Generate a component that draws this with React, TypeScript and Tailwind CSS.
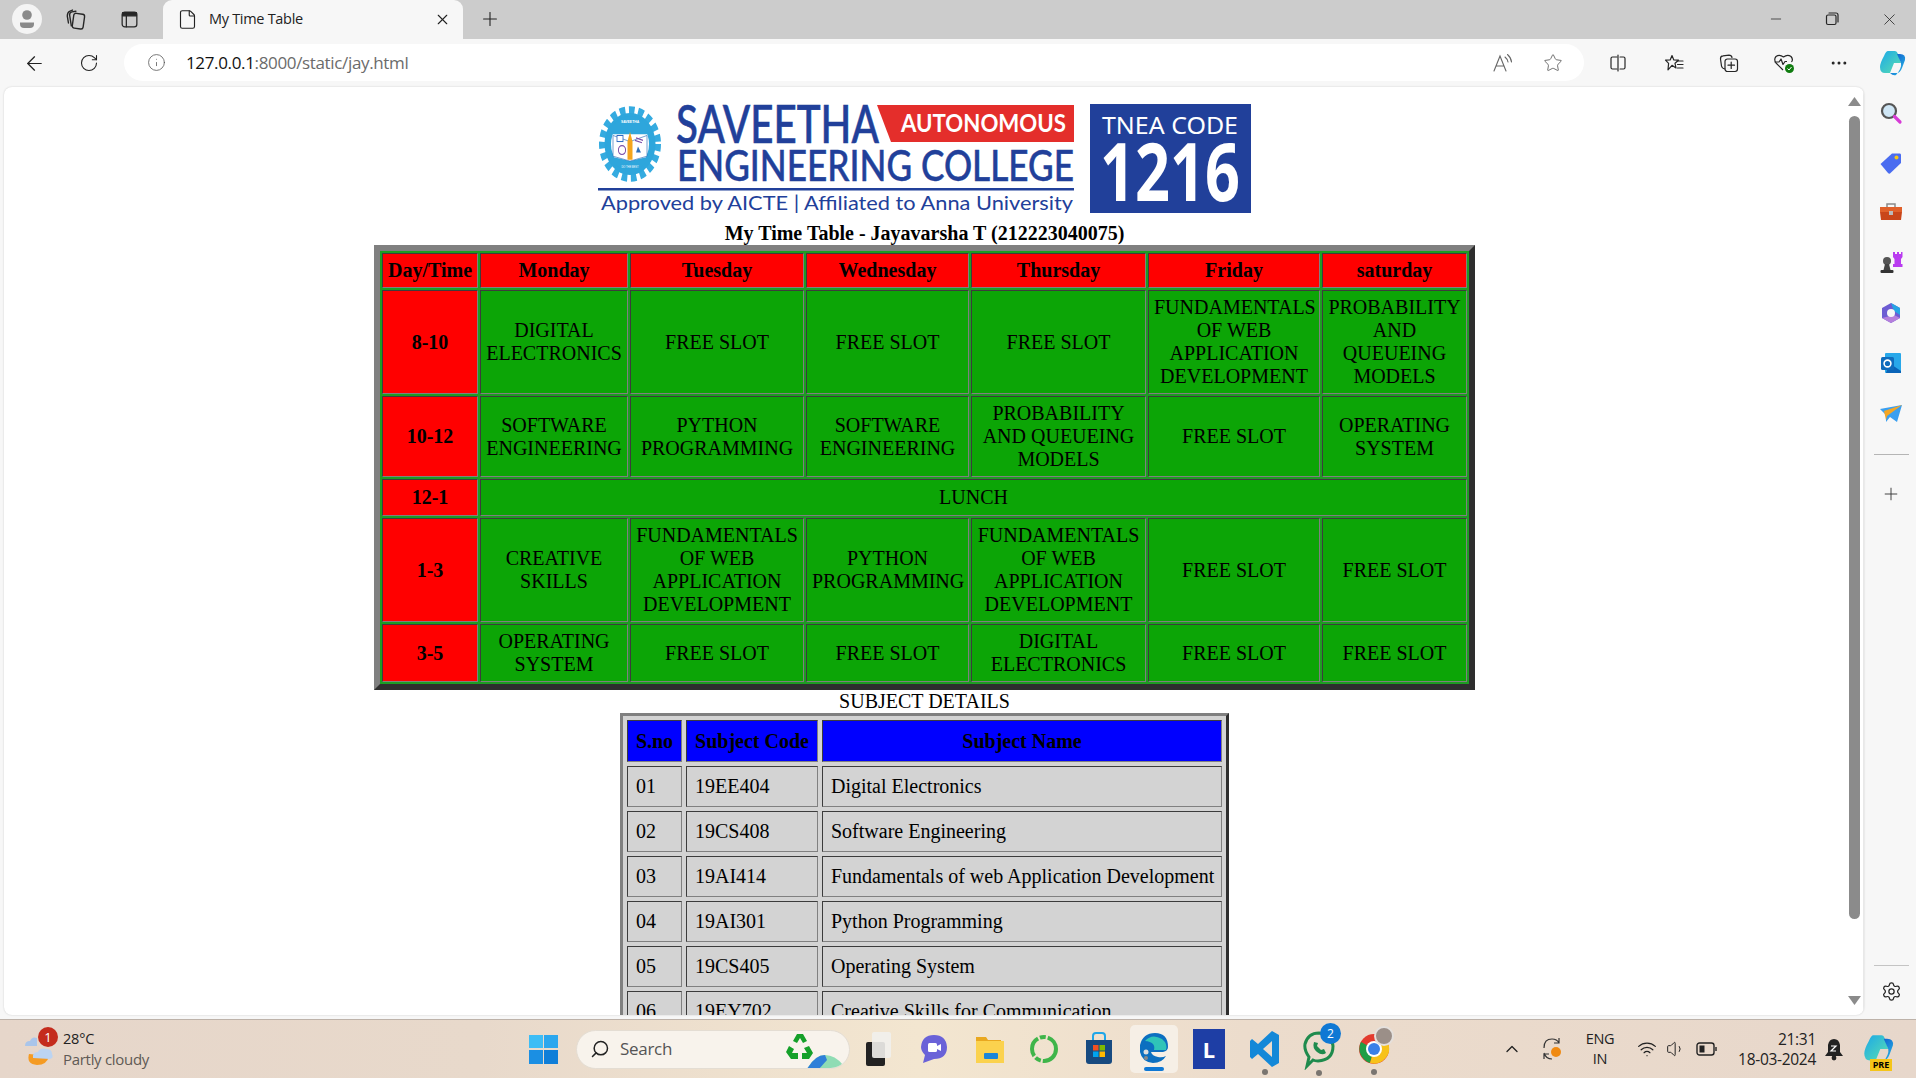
import React from "react";
import { ArrowLeft, RotateCw, Info, X, Plus, Star, Minus, MoreHorizontal, Search, ChevronUp, Wifi, Volume1, Settings, File } from "lucide-react";

const cell = "border border-solid border-t-[#3c3c3c] border-l-[#3c3c3c] border-b-[#808080] border-r-[#808080] p-[5px] text-center align-middle";
const red = "bg-[#ff0000] font-bold " + cell;
const grn = "bg-[#0ca506] font-normal " + cell;

const days = ["Monday", "Tuesday", "Wednesday", "Thursday", "Friday", "saturday"];
const FWAD = "FUNDAMENTALS OF WEB APPLICATION DEVELOPMENT";
const PQM = "PROBABILITY AND QUEUEING MODELS";
const rows: [string, string[]][] = [
  ["8-10", ["DIGITAL ELECTRONICS", "FREE SLOT", "FREE SLOT", "FREE SLOT", FWAD, PQM]],
  ["10-12", ["SOFTWARE ENGINEERING", "PYTHON PROGRAMMING", "SOFTWARE ENGINEERING", PQM, "FREE SLOT", "OPERATING SYSTEM"]],
  ["12-1", ["LUNCH"]],
  ["1-3", ["CREATIVE SKILLS", FWAD, "PYTHON PROGRAMMING", FWAD, "FREE SLOT", "FREE SLOT"]],
  ["3-5", ["OPERATING SYSTEM", "FREE SLOT", "FREE SLOT", "DIGITAL ELECTRONICS", "FREE SLOT", "FREE SLOT"]],
];
const subjects = [
  ["01", "19EE404", "Digital Electronics"],
  ["02", "19CS408", "Software Engineering"],
  ["03", "19AI414", "Fundamentals of web Application Development"],
  ["04", "19AI301", "Python Programming"],
  ["05", "19CS405", "Operating System"],
  ["06", "19EY702", "Creative Skills for Communication"],
];
const subTh = "bg-[#0000ff] font-bold whitespace-nowrap border border-solid border-t-[#3c3c3c] border-l-[#3c3c3c] border-b-[#808080] border-r-[#808080] py-[8px] text-center";
const subTd = "bg-[#d3d3d3] font-normal whitespace-nowrap border border-solid border-t-[#3c3c3c] border-l-[#3c3c3c] border-b-[#808080] border-r-[#808080] px-[8px] py-[8px] text-left";

function Logo() {
  return (
    <svg width="653" height="109" viewBox="598 104 653 109" className="block">
      <g transform="translate(630 144) scale(1 1.22)">
        <circle r="27" fill="none" stroke="#35abe0" strokeWidth="8" strokeDasharray="5.5 3.5" />
        <circle r="25.5" fill="#2ea6dc" />
        <circle r="19" fill="#fff" />
        <path d="M-17 -8 L-17 -15 A22 22 0 0 1 17 -15 L17 -8 Z" fill="#2ea6dc" />
        <path d="M-15 16 A22 22 0 0 0 15 16 L15 11 L0 14 L-15 11 Z" fill="#2ea6dc" />
        <path d="M-17 -7 L0 -2 L17 -7 L17 10 L0 14 L-17 10 Z" fill="#fff" stroke="#2f6fb8" strokeWidth="0.6" />
        <rect x="-13" y="-7" width="6" height="5" fill="#fff" stroke="#2563c0" strokeWidth="0.8" />
        <circle cx="-8" cy="5" r="3.6" fill="none" stroke="#7c4fa8" strokeWidth="1" />
        <path d="M6 -5 L13 -3 M5 -3 L12 -1" stroke="#7c4fa8" strokeWidth="1" />
        <path d="M8 2 L11 7 L6 7 Z" fill="#2f6fb8" />
        <path d="M0 -10 L2.5 -2 L2.5 13 L-2.5 13 L-2.5 -2 Z" fill="#f4a51c" />
        <text y="-17" textAnchor="middle" fontSize="3.4" fontWeight="700" fill="#fff" fontFamily="'Liberation Sans', sans-serif">SAVEETHA</text>
        <text y="20" textAnchor="middle" fontSize="2.6" fill="#fff" fontFamily="'Liberation Sans', sans-serif">DO THE BEST</text>
      </g>
      <polygon points="877,105 1074,105 1074,142 891,142" fill="#e42e2b" />
      <g fontFamily="'Lato', 'Noto Sans', 'Liberation Sans', sans-serif">
        <text x="676" y="143" fontSize="53" fontWeight="500" fill="#21409a" stroke="#21409a" strokeWidth="0.6" textLength="203" lengthAdjust="spacingAndGlyphs">SAVEETHA</text>
        <text x="677" y="181" fontSize="43" fontWeight="500" fill="#21409a" stroke="#21409a" strokeWidth="0.5" textLength="397" lengthAdjust="spacingAndGlyphs">ENGINEERING COLLEGE</text>
        <text x="901" y="132" fontSize="25" fontWeight="700" fill="#fff" textLength="165" lengthAdjust="spacingAndGlyphs">AUTONOMOUS</text>
        <text x="601" y="210" fontSize="20" fill="#21409a" textLength="472" lengthAdjust="spacingAndGlyphs">Approved by AICTE  |  Affiliated to Anna University</text>
      </g>
      <rect x="598" y="188" width="476" height="2.5" fill="#21409a" />
      <rect x="1090" y="104" width="161" height="109" fill="#21409a" />
      <g fontFamily="'Noto Sans', 'Liberation Sans', sans-serif" fill="#fff">
        <text x="1102" y="134" fontSize="24" textLength="136" lengthAdjust="spacingAndGlyphs">TNEA CODE</text>
        <text x="1100" y="201" fontSize="80" fontWeight="700" textLength="140" lengthAdjust="spacingAndGlyphs">1216</text>
      </g>
    </svg>
  );
}

const Box = ({ w = 24, className = "", children }: { w?: number; className?: string; children: React.ReactNode }) => (
  <div className={"flex items-center justify-center shrink-0 " + className} style={{ width: w }}>{children}</div>
);

const I = ({ children, s = 20, vb = 20 }: { children: React.ReactNode; s?: number; vb?: number }) => (
  <svg width={s} height={s} viewBox={`0 0 ${vb} ${vb}`} fill="none" stroke="#262626" strokeWidth="1.2" strokeLinecap="round" strokeLinejoin="round">{children}</svg>
);

function TabBar() {
  return (
    <div className="h-[39px] bg-[#cccccc] flex items-stretch shrink-0">
      <Box w={30} className="ml-[12px] pb-[1px]">
        <div className="w-[30px] h-[30px] rounded-full bg-[#f4f4f4] flex items-center justify-center">
          <svg width="16" height="20" viewBox="0 0 16 20"><circle cx="8" cy="6" r="4.8" fill="#8a8a8a" /><path d="M1 13.5 H15 V15 A4 4 0 0 1 11 19 H5 A4 4 0 0 1 1 15 Z" fill="#8a8a8a" /></svg>
        </div>
      </Box>
      <Box className="ml-[22px] pb-[1px]">
        <I s={23}><rect x="7" y="5" width="9.5" height="13" rx="2" transform="rotate(8 12 11)" /><path d="M5.5 15.5 L4 6 Q4 3.8 6 3.4 L9.5 2.8" /><path d="M3 13 L2 7 Q2 4 4 3 L6.5 1.8" /></I>
      </Box>
      <Box className="ml-[29px] pb-[1px]">
        <I s={21}><rect x="3" y="3" width="14" height="14" rx="2.5" /><path d="M3.4 3.5 H16.6 V6.5 H3.4 Z" fill="#262626" /><path d="M7 6.5 V17" /></I>
      </Box>
      <div className="ml-[22px] w-[300px] bg-[#f7f7f7] rounded-t-[9px] flex items-center pb-[1px]">
        <File size={21} strokeWidth={1.3} color="#222" className="ml-[14px]" />
        <span className="ml-[11px] text-[14.5px] text-[#222] font-['Open_Sans','Noto_Sans',sans-serif] tracking-[-0.3px]">My Time Table</span>
        <X size={17} strokeWidth={1.6} color="#222" className="ml-auto mr-[12px]" />
      </div>
      <Box className="ml-[15px] pb-[1px]"><Plus size={22} strokeWidth={1.2} color="#222" /></Box>
      <div className="ml-auto flex pb-[1px]">
        <Box w={56}><Minus size={16} strokeWidth={1.1} color="#222" /></Box>
        <Box w={56}>
          <I s={16} vb={16}><rect x="2.5" y="4" width="9.5" height="9.5" rx="1.5" /><path d="M5 2 H12 Q14 2 14 4 V11" /></I>
        </Box>
        <Box w={56} className="pl-[3px]"><X size={19} strokeWidth={1} color="#222" /></Box>
      </div>
    </div>
  );
}

function Toolbar() {
  return (
    <div className="h-[48px] flex items-center shrink-0">
      <Box className="ml-[22px]"><ArrowLeft size={23} strokeWidth={1.3} color="#222" /></Box>
      <Box className="ml-[31px]"><RotateCw size={20} strokeWidth={1.3} color="#222" /></Box>
      <div className="ml-[23px] w-[1460px] h-[37px] -mt-[1px] bg-white rounded-full flex items-center">
        <Box w={20} className="ml-[22px]"><Info size={19} strokeWidth={1} color="#555" /></Box>
        <span className="ml-[20px] text-[17px] font-['Open_Sans','Noto_Sans',sans-serif] tracking-[-0.35px] text-[#6b6b6b]"><span className="text-[#111]">127.0.0.1</span>:8000/static/jay.html</span>
        <div className="ml-auto flex items-center gap-[26px] mr-[19px]">
          <Box>
            <svg width="22" height="22" viewBox="0 0 22 22" fill="none" stroke="#666" strokeWidth="1.1" strokeLinecap="round"><path d="M2 19 L8 4 L14 19 M4.2 14 H12" /><path d="M13 5 Q15.5 7 16 10 M15.5 2.5 Q19 5.5 19.5 10" /></svg>
          </Box>
          <Box><Star size={20} strokeWidth={1.1} color="#666" /></Box>
        </div>
      </div>
      <Box className="ml-[22px]">
        <I><path d="M9 4 H4.5 Q3 4 3 5.5 V14.5 Q3 16 4.5 16 H9" /><path d="M10 2 V18" /><path d="M12 4 H15.5 Q17 4 17 5.5 V14.5 Q17 16 15.5 16 H12" /></I>
      </Box>
      <Box className="ml-[32px]">
        <I><path d="M8 2.5 L9.8 7 L14.5 7.2 L11 10.3 L12 15 L8 12.3 L4 16.8 L4.6 10.3 L1.5 7.2 L6.2 7 Z" /><path d="M13 8 H19 M13.5 11.5 H19 M13.5 15 H19" /></I>
      </Box>
      <Box className="ml-[31px]">
        <I><path d="M6 16 Q3 15.5 2.5 13 L1.5 6 Q1.3 3 4 2.8 L10 2.2 Q12.5 2.2 13 4.5" /><rect x="6" y="6" width="12.5" height="12.5" rx="2.4" /><path d="M12.2 9 V15.5 M9 12.2 H15.5" /></I>
      </Box>
      <Box className="ml-[31px]">
        <svg width="22" height="22" viewBox="0 0 22 22" fill="none" stroke="#262626" strokeWidth="1.2" strokeLinejoin="round">
          <path d="M10 18 L3 11 Q0.5 7.5 3 4.5 Q6.5 1.8 10.5 5 Q14.5 1.8 18 4.5 Q20.5 7.5 18.5 10" />
          <path d="M1.5 10 H6 L8 7 L10 12.5 L12 9.5 H14" />
          <circle cx="16.5" cy="16.5" r="4.5" fill="#107c10" stroke="none" />
          <path d="M14.5 16.5 L16 18 L18.5 15" stroke="#fff" strokeWidth="1" />
        </svg>
      </Box>
      <Box className="ml-[31px]"><MoreHorizontal size={20} strokeWidth={1.6} color="#222" /></Box>
      <Box w={28} className="ml-[27px]"><Copilot size={30} /></Box>
    </div>
  );
}

function Copilot({ size = 28 }: { size?: number }) {
  return (
    <svg width={size} height={size} viewBox="0 0 28 28">
      <defs>
        <linearGradient id="cpA" x1="0" y1="0" x2="1" y2="1"><stop offset="0" stopColor="#1ba8e8" /><stop offset="1" stopColor="#5ce0b0" /></linearGradient>
        <linearGradient id="cpB" x1="0" y1="0" x2="1" y2="1"><stop offset="0" stopColor="#0d47c9" /><stop offset="1" stopColor="#28c3e8" /></linearGradient>
      </defs>
      <path d="M10 2 H17 Q19 2 20 5 L23 14 H16 L12 24 H7 Q2 24 2 18 Q2 14 6 7 Q8 2 10 2 Z" fill="url(#cpA)" />
      <path d="M12 24 H19 Q22 24 24 19 L27 11 Q28 5 22 5 H19 L23 14 Q24 19 18 26 Q15 27 12 24 Z" fill="url(#cpB)" />
    </svg>
  );
}

function Sidebar() {
  return (
    <div className="flex-1 flex flex-col items-center pl-[2px] pt-[14px] pb-[17px] gap-[26px]">
      <Box>
        <svg width="24" height="24" viewBox="0 0 24 24"><circle cx="10" cy="10" r="7" fill="#cfe6f5" stroke="#555" strokeWidth="2.2" /><path d="M15.5 15.5 L21 21" stroke="#d63bd6" strokeWidth="3.2" strokeLinecap="round" /></svg>
      </Box>
      <Box>
        <svg width="24" height="24" viewBox="0 0 24 24"><path d="M1.5 13 L13 2.5 H21 Q22 2.5 22 4 V12 L11 22.5 Q10 23 9 22 Z" fill="#4a6cf0" /><circle cx="17.5" cy="6.5" r="2" fill="#f5c518" /></svg>
      </Box>
      <Box>
        <svg width="24" height="24" viewBox="0 0 24 24"><path d="M8 6 V3 H16 V6" fill="none" stroke="#8a8a8a" strokeWidth="1.5" /><path d="M1 6 H23 V11 L22 19 H2 L1 11 Z" fill="#c9461a" /><rect x="1" y="6" width="22" height="5" fill="#e0602a" /><rect x="10" y="10" width="4" height="4" fill="#bbb" /></svg>
      </Box>
      <Box>
        <svg width="24" height="24" viewBox="0 0 24 24"><circle cx="8" cy="10" r="4" fill="#555" /><path d="M6 13 H10 L11.5 19 H4.5 Z" fill="#444" /><rect x="1.5" y="19" width="13" height="3" rx="1" fill="#333" /><path d="M14 1 H16 V3 H18 V1 H20 V3 H22 V1 H23.5 V6 L22 8 V13 H23.5 V16 H14 V13 H15.5 V8 L14 6 Z" fill="#b93cf0" /></svg>
      </Box>
      <Box>
        <svg width="24" height="24" viewBox="0 0 24 24" fill="none"><path d="M12 2 L21 7 V17 L12 22 L3 17 V7 Z" fill="#6d5cd3" /><path d="M12 2 L21 7 V14 L15 10 Z" fill="#26a5e4" /><path d="M3 17 L12 22 L21 17 L15 14 Z" fill="#b57fdc" /><circle cx="12" cy="12" r="4" fill="#f7f7f7" /></svg>
      </Box>
      <Box>
        <svg width="24" height="24" viewBox="0 0 24 24"><rect x="6" y="2" width="16" height="20" rx="1" fill="#28a8ea" /><path d="M10 12 L22 20 V22 H7 Z" fill="#0a64b8" /><rect x="2" y="6" width="13" height="13" rx="1.5" fill="#0f6cbd" /><circle cx="8.5" cy="12.5" r="3.4" fill="none" stroke="#fff" strokeWidth="1.6" /></svg>
      </Box>
      <Box>
        <svg width="24" height="24" viewBox="0 0 24 24"><path d="M1 8 L23 4 L18 21 L11 16 L7 21 L7 14 Z" fill="#3a9ff0" /><path d="M5 10 L23 4 L8 15 L7 19 Z" fill="#f5a623" /></svg>
      </Box>
      <div className="w-[35px] h-[1px] bg-[#b5b5b5] mt-[3px]" />
      <Box className="mt-[3px]"><Plus size={20} strokeWidth={1.1} color="#333" /></Box>
      <div className="mt-auto w-[35px] h-[1px] bg-[#c4c4c4]" />
      <Box className="-mt-[11px]"><Settings size={21} strokeWidth={1.4} color="#222" /></Box>
    </div>
  );
}

function Scrollbar() {
  return (
    <div className="w-[19px] flex flex-col items-center shrink-0 border-r border-r-[#e8e8e8]">
      <svg width="13" height="9" viewBox="0 0 13 9" className="mt-[10px]"><path d="M6.5 0 L13 9 H0 Z" fill="#8b8b8b" /></svg>
      <div className="w-[11px] h-[803px] rounded-full bg-[#8b8b8b] mt-[10px]" />
      <svg width="13" height="9" viewBox="0 0 13 9" className="mt-auto mb-[10px]"><path d="M0 0 H13 L6.5 9 Z" fill="#8b8b8b" /></svg>
    </div>
  );
}

function Page() {
  return (
    <div className="w-[1841px] h-full overflow-hidden flex flex-col items-center font-['Liberation_Serif','Times_New_Roman',serif] text-[20px] leading-[23px] text-black">
      <div className="h-[135px] w-full shrink-0 flex justify-center items-start pt-[17px]"><Logo /></div>
      <div className="font-bold h-[23px] shrink-0">My Time Table - Jayavarsha T (212223040075)</div>
      <table className="table-fixed w-[1101px] shrink-0 border-separate border-spacing-[2px] bg-[#1d9d22] border-[6px] border-solid border-t-[#808080] border-l-[#808080] border-b-[#2e2e2e] border-r-[#2e2e2e]">
        <colgroup>
          <col className="w-[96px]" /><col className="w-[148px]" /><col className="w-[174px]" /><col className="w-[163px]" /><col className="w-[175px]" /><col className="w-[172px]" /><col className="w-[145px]" />
        </colgroup>
        <thead>
          <tr>
            <th className={red + " px-0"}>Day/Time</th>
            {days.map((d) => <th key={d} className={red}>{d}</th>)}
          </tr>
        </thead>
        <tbody>
          {rows.map(([t, cs]) => (
            <tr key={t} className={cs.length === 1 ? "h-[37px]" : ""}>
              <th className={red}>{t}</th>
              {cs.map((c, i) => <td key={i} colSpan={cs.length === 1 ? 6 : 1} className={grn}>{c}</td>)}
            </tr>
          ))}
        </tbody>
      </table>
      <div className="h-[23px] shrink-0">SUBJECT DETAILS</div>
      <table className="table-fixed w-[609px] shrink-0 border-separate border-spacing-[4px] bg-[#d3d3d3] border-[3px] border-solid border-t-[#808080] border-l-[#808080] border-b-[#2e2e2e] border-r-[#2e2e2e]">
        <colgroup><col className="w-[55px]" /><col className="w-[132px]" /><col className="w-[400px]" /></colgroup>
        <thead>
          <tr className="h-[42px]"><th className={subTh + " px-0"}>S.no</th><th className={subTh + " px-0"}>Subject Code</th><th className={subTh + " px-[8px]"}>Subject Name</th></tr>
        </thead>
        <tbody>
          {subjects.map((r) => (
            <tr key={r[0]}>{r.map((c, i) => <td key={i} className={subTd}>{c}</td>)}</tr>
          ))}
        </tbody>
      </table>
    </div>
  );
}

function Taskbar() {
  return (
    <div className="h-[59px] shrink-0 border-t border-t-[#bdb2a9] bg-[linear-gradient(90deg,#e6d6ca,#e8d9cb_25%,#f3e6d0_48%,#ecdccc_65%,#e7d7cb)] flex items-center font-['Open_Sans','Noto_Sans',sans-serif] text-[#222]">
      <div className="relative w-[34px] ml-[23px] h-[38px]">
        <svg width="34" height="38" viewBox="0 0 34 38">
          <path d="M2 16 Q2 11 7 11 Q9 6 14 8 L14 16 Z" fill="#a9c5ea" />
          <path d="M6 24 Q3 34 14 35 Q24 35 26 26 Z" fill="#f59b23" />
          <path d="M10 28 Q9 22 15 22 Q17 17 23 19 Q29 19 29 24 Q31 28 27 29 Z" fill="#bcd4f2" />
        </svg>
        <div className="absolute top-[-3px] left-[15px] w-[20px] h-[20px] rounded-full bg-[#c42b1c] text-white text-[13px] leading-[20px] text-center">1</div>
      </div>
      <div className="ml-[6px] flex flex-col w-[120px] leading-[20px] -mt-[1px]">
        <span className="text-[14.5px] tracking-[-0.2px]">28°C</span>
        <span className="text-[15px] text-[#5f5a55] tracking-[-0.3px]">Partly cloudy</span>
      </div>
      <div className="ml-[346px] w-[29px] h-[29px] grid grid-cols-2 grid-rows-2 gap-[1.5px]">
        <div className="bg-[#3dbdf5]" /><div className="bg-[#2ba7ee]" /><div className="bg-[#1b8fe3]" /><div className="bg-[#0f7ed8]" />
      </div>
      <div className="ml-[18px] w-[274px] h-[39px] rounded-full bg-[#f8f3ec] border border-[#e4ddd3] flex items-center relative overflow-hidden">
        <Search size={20} strokeWidth={1.8} color="#222" className="ml-[13px] -scale-x-100" />
        <span className="ml-[10px] text-[17px] text-[#555] tracking-[-0.3px]">Search</span>
        <svg width="60" height="40" viewBox="0 0 60 40" className="ml-auto mr-[6px]">
          <path d="M14 5 L20 5 L24 12 L20 14 L17 9 L14 14 L10 12 Z M6 17 L11 20 L9 24 H15 V30 H8 L3 23 Z M26 17 L30 24 L26 30 H19 V24 H24 L21 19 Z" fill="#15a02a" />
          <path d="M24 40 Q32 26 42 26 Q52 26 60 36 V40 Z" fill="#8fdcb4" />
          <path d="M24 40 Q32 26 42 26 L44 31 L36 40 Z" fill="#2f7fd8" />
        </svg>
      </div>
      <Box w={30} className="ml-[13px]">
        <div className="relative w-[30px] h-[34px]">
          <div className="absolute left-[3px] bottom-0 w-[19px] h-[24px] bg-[#222] rounded-[2px]" />
          <div className="absolute left-[9px] top-[0px] w-[19px] h-[26px] bg-[#f1efec] rounded-[2px] opacity-90" />
        </div>
      </Box>
      <Box w={40} className="ml-[21px]">
        <svg width="32" height="32" viewBox="0 0 32 32"><path d="M16 2 Q28 2 29 14 Q29 26 16 26 L5 30 L7 22 Q3 18 3 14 Q4 2 16 2 Z" fill="#6a62d8" /><rect x="10" y="10" width="9" height="9" rx="1.5" fill="#fff" /><path d="M19 13 L23 11 V18 L19 16 Z" fill="#fff" /></svg>
      </Box>
      <Box w={40} className="ml-[16px]">
        <svg width="32" height="32" viewBox="0 0 32 32"><path d="M2 4 H12 L14 7 H27 V30 H2 Z" fill="#e9a820" /><rect x="2" y="8" width="28" height="22" fill="#fbd24e" /><rect x="10" y="20" width="14" height="6" rx="1" fill="#1b86d8" /></svg>
      </Box>
      <Box w={40} className="ml-[14px]">
        <svg width="32" height="32" viewBox="0 0 32 32" fill="none"><circle cx="16" cy="16" r="12" stroke="#3fb54a" strokeWidth="4" strokeDasharray="20 2 6 2" /></svg>
      </Box>
      <Box w={40} className="ml-[15px]">
        <svg width="32" height="34" viewBox="0 0 32 34"><path d="M10 8 V4 Q10 1 13 1 H19 Q22 1 22 4 V8" fill="none" stroke="#1fa6e8" strokeWidth="2" /><path d="M3 8 H29 V29 Q29 32 26 32 H6 Q3 32 3 29 Z" fill="#174a80" /><rect x="10" y="13" width="5.5" height="5.5" fill="#f25022" /><rect x="16.5" y="13" width="5.5" height="5.5" fill="#7fba00" /><rect x="10" y="19.5" width="5.5" height="5.5" fill="#00a4ef" /><rect x="16.5" y="19.5" width="5.5" height="5.5" fill="#ffb900" /></svg>
      </Box>
      <div className="ml-[11px] w-[48px] h-[48px] bg-[#f6efe6] rounded-[5px] flex flex-col items-center relative">
        <svg width="34" height="34" viewBox="0 0 34 34" className="mt-[6px]"><path d="M3 14 Q6 2 18 2 Q31 2 31 16 Q31 20 26 21 H14 Q15 25 21 26 Q25 27 29 25 Q25 32 16 32 Q5 31 3 21 Z" fill="#0c6fc0" /><path d="M8 10 Q15 2 25 8 Q31 13 29 19 H17 Q19 11 8 10 Z" fill="#2fc4b8" /><circle cx="9" cy="21" r="2.5" fill="#ddd" /><circle cx="9" cy="27" r="2" fill="#888" /></svg>
        <div className="absolute bottom-[2px] w-[20px] h-[4px] rounded-full bg-[#0f78d4]" />
      </div>
      <Box w={32} className="ml-[15px]">
        <div className="w-[32px] h-[40px] bg-[#1e3ea5] text-white font-bold text-[22px] leading-[40px] text-center font-['Noto_Sans',sans-serif]">L</div>
      </Box>
      <Box w={32} className="ml-[24px] relative">
        <svg width="32" height="40" viewBox="0 0 32 40"><path d="M23 2 L30 6 V34 L23 38 L9 25 L3 30 L1 28 V12 L3 10 L9 15 Z M23 12 L14 20 L23 28 Z" fill="#1488d8" /></svg>
        <div className="absolute -bottom-[6px] left-[13px] w-[6px] h-[6px] rounded-full bg-[#7a7570]" />
      </Box>
      <Box w={36} className="ml-[20px] relative">
        <svg width="32" height="42" viewBox="0 0 32 42" fill="none"><path d="M4 38 L6 29 Q1 22 2 16 Q5 5 16 5 Q29 6 30 18 Q30 32 15 33 Q12 33 10 32 Z" stroke="#1f8b4d" strokeWidth="3" /><path d="M11 14 Q9 20 14 24 Q19 28 23 25 L21 21 L18 22 L14 18 L15 15 Z" fill="#1f8b4d" /></svg>
        <div className="absolute -top-[5px] left-[19px] w-[21px] h-[21px] rounded-full bg-[#0f78d4] text-white text-[12px] leading-[21px] text-center">2</div>
        <div className="absolute -bottom-[6px] left-[15px] w-[6px] h-[6px] rounded-full bg-[#7a7570]" />
      </Box>
      <Box w={36} className="ml-[19px] relative">
        <svg width="32" height="32" viewBox="0 0 32 32"><circle cx="16" cy="16" r="15" fill="#e33b2e" /><path d="M16 16 L3 9 A15 15 0 0 0 12 30 Z" fill="#1f9e45" /><path d="M16 16 L12 30 A15 15 0 0 0 30 10 L16 10 Z" fill="#f7c21a" /><circle cx="16" cy="16" r="8" fill="#fff" /><circle cx="16" cy="16" r="6" fill="#3a80e8" /></svg>
        <div className="absolute -top-[7px] left-[18px] w-[20px] h-[20px] rounded-full bg-[#9b8f88] border-2 border-[#e5e0dc]" />
        <div className="absolute -bottom-[10px] left-[15px] w-[6px] h-[6px] rounded-full bg-[#7a7570]" />
      </Box>
      <Box className="ml-[108px]"><ChevronUp size={20} strokeWidth={1.6} color="#222" /></Box>
      <Box className="ml-[16px]">
        <svg width="24" height="26" viewBox="0 0 24 26" fill="none" stroke="#333" strokeWidth="1.2"><path d="M4 12 Q4 3 12 3 Q17 3 19 7 M19 2 V7 H14" /><path d="M4 17 Q6 23 12 23 M4 23 V18 H9" /><circle cx="16" cy="16" r="5" fill="#f08a12" stroke="none" /></svg>
      </Box>
      <div className="ml-[13px] w-[46px] text-center text-[14.5px] leading-[20px] tracking-[-0.3px]">ENG<br />IN</div>
      <Box className="ml-[12px]"><Wifi size={20} strokeWidth={1.5} color="#222" /></Box>
      <Box className="ml-[5px]"><Volume1 size={20} strokeWidth={1.2} color="#222" /></Box>
      <Box className="ml-[7px]">
        <svg width="22" height="14" viewBox="0 0 22 14" fill="none" stroke="#222" strokeWidth="1.4"><rect x="1" y="1" width="17" height="12" rx="2.5" /><rect x="3.5" y="3.5" width="5" height="7" fill="#222" stroke="none" /><path d="M20 5 V9" /></svg>
      </Box>
      <div className="ml-[8px] w-[89px] text-right text-[15.5px] leading-[20px] tracking-[-0.3px] whitespace-nowrap">21:31<br />18-03-2024</div>
      <Box className="ml-[6px]">
        <svg width="20" height="24" viewBox="0 0 20 24"><path d="M10 2 Q15 2 16 8 V15 L19 19 H1 L4 15 V8 Q5 2 10 2 Z" fill="#222" /><circle cx="10" cy="21" r="2.4" fill="#222" /><path d="M7 9 H12 L7 14 H12" stroke="#fff" strokeWidth="1.2" fill="none" /></svg>
      </Box>
      <Box w={32} className="ml-[16px] relative">
        <Copilot size={32} />
        <div className="absolute -bottom-[6px] left-[8px] w-[22px] h-[12px] bg-[#f5c518] text-[9px] leading-[12px] font-bold text-center text-black">PRE</div>
      </Box>
    </div>
  );
}

export default function App() {
  return (
    <div className="w-[1916px] h-[1078px] overflow-hidden flex flex-col bg-[#f7f7f7]">
      <TabBar />
      <Toolbar />
      <div className="h-[932px] flex shrink-0">
        <div className="ml-[4px] w-[1860px] h-[928px] bg-white rounded-[8px] flex overflow-hidden shrink-0 shadow-[0_0_2px_rgba(0,0,0,0.18)]">
          <Page />
          <Scrollbar />
        </div>
        <Sidebar />
      </div>
      <Taskbar />
    </div>
  );
}
